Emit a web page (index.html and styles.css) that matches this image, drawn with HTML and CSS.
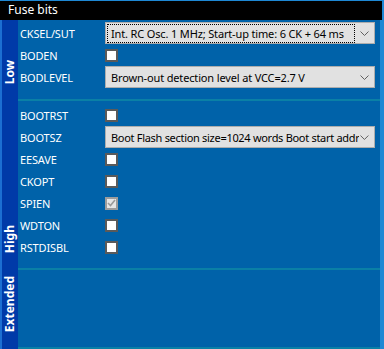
FILE: index.html
```html
<!DOCTYPE html>
<html>
<head>
<meta charset="utf-8">
<link rel="stylesheet" href="styles.css">
</head>
<body>
<div class="frame">
  <div class="header">Fuse bits</div>
  <div class="section">
    <div class="tab"><span class="tab-label">Low</span></div>
    <div class="content low">
      <div class="row"><span class="name">CKSEL/SUT</span>
        <div class="combo"><span class="combo-text focus">Int. RC Osc. 1 MHz; Start-up time: 6 CK + 64 ms</span>
          <svg class="chev" width="9" height="5" viewBox="0 0 9 5"><polyline points="0.5,0.5 4.5,4.5 8.5,0.5" fill="none" stroke="#606060" stroke-width="1"/></svg></div></div>
      <div class="row"><span class="name">BODEN</span><span class="check"></span></div>
      <div class="row"><span class="name">BODLEVEL</span>
        <div class="combo"><span class="combo-text">Brown-out detection level at VCC=2.7 V</span>
          <svg class="chev" width="9" height="5" viewBox="0 0 9 5"><polyline points="0.5,0.5 4.5,4.5 8.5,0.5" fill="none" stroke="#606060" stroke-width="1"/></svg></div></div>
    </div>
  </div>
  <div class="section">
    <div class="tab"><span class="tab-label">High</span></div>
    <div class="content high">
      <div class="row"><span class="name">BOOTRST</span><span class="check"></span></div>
      <div class="row"><span class="name">BOOTSZ</span>
        <div class="combo"><span class="combo-text tight">Boot Flash section size=1024 words Boot start addr</span>
          <svg class="chev" width="9" height="5" viewBox="0 0 9 5"><polyline points="0.5,0.5 4.5,4.5 8.5,0.5" fill="none" stroke="#606060" stroke-width="1"/></svg></div></div>
      <div class="row"><span class="name">EESAVE</span><span class="check"></span></div>
      <div class="row"><span class="name">CKOPT</span><span class="check"></span></div>
      <div class="row"><span class="name">SPIEN</span><span class="check checked disabled"><svg width="9" height="8" viewBox="0 0 9 8"><polyline points="1,4 3.5,6.5 8,1" fill="none" stroke="#9a9a9a" stroke-width="1.6"/></svg></span></div>
      <div class="row"><span class="name">WDTON</span><span class="check"></span></div>
      <div class="row"><span class="name">RSTDISBL</span><span class="check"></span></div>
    </div>
  </div>
  <div class="section">
    <div class="tab"><span class="tab-label">Extended</span></div>
    <div class="content ext"></div>
  </div>
</div>
</body>
</html>
```
FILE: styles.css
```css
html, body {
  margin: 0;
  padding: 0;
  background: #1e88d4;
}
body {
  font-family: "Noto Sans", "Open Sans", sans-serif;
  font-size: 11px;
  letter-spacing: -0.15px;
  width: 384px;
  height: 349px;
  overflow: hidden;
}
.frame {
  border-top: 1px solid #1e88d4;
  width: 380px;
  padding-right: 4px;
  background: #1e88d4;
}
.header {
  background: #000;
  color: #fff;
  height: 19px;
  line-height: 18px;
  padding-left: 8px;
  font-size: 12px;
  letter-spacing: 0;
  margin-right: -2px;
}
.section {
  display: flex;
}
.tab {
  width: 18px;
  border-left: 2px solid #1c6fd2;
  background: #003aa8;
  display: flex;
  flex-direction: column;
  justify-content: flex-end;
  align-items: center;
  padding-bottom: 17px;
  box-sizing: border-box;
}
.tab-label {
  writing-mode: vertical-rl;
  transform: rotate(180deg);
  color: #fff;
  font-weight: bold;
  font-size: 12px;
  letter-spacing: 0;
  line-height: 18px;
}
.content {
  flex: 1;
  background: #0062a9;
  border-bottom: 2px solid #0a80a6;
  padding-left: 2px;
}
.low {
  padding-top: 2px;
  box-sizing: border-box;
  height: 81px;
}
.high {
  padding-top: 3px;
  box-sizing: border-box;
  height: 169px;
}
.ext {
  box-sizing: border-box;
  height: 79px;
}
.row {
  display: flex;
  align-items: center;
  height: 22px;
}
.name {
  width: 85px;
  color: #fff;
}
.combo {
  width: 268px;
  height: 20px;
  background: #e1e1e1;
  border: 1px solid #adadad;
  display: flex;
  align-items: center;
}
.combo-text {
  color: #000;
  padding-left: 3px;
  margin-left: 1px;
  width: 248px;
  white-space: nowrap;
  overflow: hidden;
  line-height: 17px;
  box-sizing: border-box;
  border: 1px solid transparent;
}
.combo-text.tight {
  width: 256px;
  letter-spacing: -0.3px;
}
.combo-text.focus {
  border: 1px dotted #000;
}
.chev {
  margin-left: auto;
  margin-right: 5px;
}
.check {
  width: 9px;
  height: 9px;
  border: 2px solid #5a5a5a;
  background: #fff;
  display: flex;
  align-items: center;
  justify-content: center;
}
.check.disabled {
  border-color: #9c9c9c;
  background: #e6e6e6;
}
```
